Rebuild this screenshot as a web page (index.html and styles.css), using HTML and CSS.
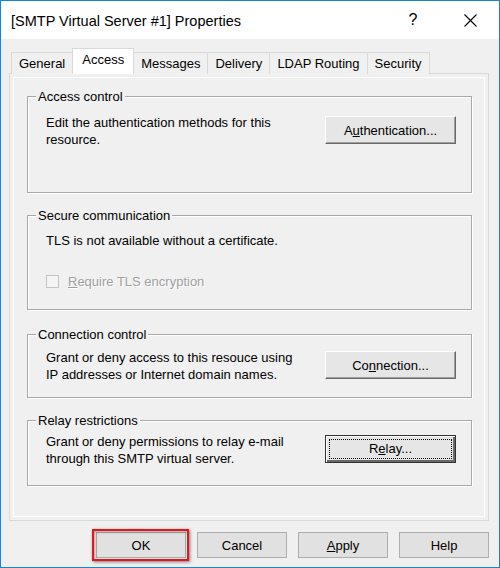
FILE: index.html
```html
<!DOCTYPE html>
<html lang="en">
<head>
    <meta charset="UTF-8">
    <title>[SMTP Virtual Server #1] Properties</title>
    <link rel="stylesheet" href="styles.css">
</head>
<body>

<div class="window">
    <div class="titlebar">
        <span class="title">[SMTP Virtual Server #1] Properties</span>
        <span class="help">?</span>
        <svg class="close" width="13" height="13" viewBox="0 0 13 13">
            <path d="M0.5 0.5 L12.5 12.5 M12.5 0.5 L0.5 12.5" stroke="#000" stroke-width="1.1" fill="none"/>
        </svg>
    </div>

    <div class="dialog">
        <div class="tabs">
            <div class="tab">General</div>
            <div class="tab active">Access</div>
            <div class="tab">Messages</div>
            <div class="tab">Delivery</div>
            <div class="tab">LDAP Routing</div>
            <div class="tab">Security</div>
        </div>

        <div class="panel">
            <div class="group group-access">
                <div class="group-title">Access control</div>
                <div class="group-body">
                    <p class="group-text">Edit the authentication methods for this<br>resource.</p>
                    <button class="btn">A<u>u</u>thentication...</button>
                </div>
            </div>

            <div class="group group-secure">
                <div class="group-title">Secure communication</div>
                <div class="group-body column">
                    <p class="group-text">TLS is not available without a certificate.</p>
                    <label class="check disabled">
                        <span class="check-box"></span>
                        <span><u>R</u>equire TLS encryption</span>
                    </label>
                </div>
            </div>

            <div class="group group-connection">
                <div class="group-title">Connection control</div>
                <div class="group-body">
                    <p class="group-text">Grant or deny access to this resouce using<br>IP addresses or Internet domain names.</p>
                    <button class="btn">Co<u>n</u>nection...</button>
                </div>
            </div>

            <div class="group group-relay">
                <div class="group-title">Relay restrictions</div>
                <div class="group-body">
                    <p class="group-text">Grant or deny permissions to relay e-mail<br>through this SMTP virtual server.</p>
                    <button class="btn focused"><span class="focus-ring">R<u>e</u>lay...</span></button>
                </div>
            </div>
        </div>

        <div class="buttons">
            <button class="dlg-btn marked">OK</button>
            <button class="dlg-btn">Cancel</button>
            <button class="dlg-btn"><u>A</u>pply</button>
            <button class="dlg-btn">Help</button>
        </div>
    </div>
</div>

</body>
</html>
```

FILE: styles.css
```css
body {
    margin: 0;
    font-family: "Liberation Sans", Arial, sans-serif;
    font-size: 13px;
    color: #000;
    background-color: #f0f0f0;
}
.window {
    width: 500px;
    height: 568px;
    box-sizing: border-box;
    border: 1px solid #1883d7;
    background-color: #f0f0f0;
}
.titlebar {
    display: flex;
    align-items: center;
    height: 38px;
    background-color: #ffffff;
}
.title {
    flex-grow: 1;
    padding-left: 10px;
    font-size: 14.5px;
    padding-top: 1px;
}
.help {
    width: 20px;
    text-align: center;
    font-size: 16px;
    margin-right: 41px;
}
.close {
    margin-right: 22px;
}
.dialog {
    padding: 9px 0 0 8px;
}

/* tab strip */
.tabs {
    display: flex;
    align-items: flex-end;
    padding-left: 2px;
    margin-bottom: -1px;
}
.tab {
    height: 21px;
    line-height: 22px;
    padding: 0 7px;
    border: 1px solid #d9d9d9;
    border-bottom: none;
    margin-right: -1px;
    background-color: #f0f0f0;
}
.tab.active {
    position: relative;
    z-index: 1;
    height: 25px;
    line-height: 22px;
    background-color: #ffffff;
    padding: 0 9px;
}
.panel {
    border: 1px solid #d9d9d9;
    box-shadow: inset 0 0 0 3px #f0f0f0, inset 0 0 0 4px #ffffff;
    padding: 22px 16px 0 17px;
    box-sizing: border-box;
    width: 480px;
    height: 448px;
}

/* group boxes */
.group {
    border: 1px solid #a9a9a9;
    box-shadow: inset 1px 1px 0 #ffffff, 1px 1px 0 #ffffff;
    box-sizing: border-box;
}
.group-title {
    display: table;
    margin: -8px 0 0 8px;
    padding: 0 2px;
    line-height: 16px;
    background-color: #f0f0f0;
}
.group-body {
    display: flex;
    justify-content: space-between;
    align-items: flex-start;
    padding: 0 15px 0 18px;
}
.group-body.column {
    flex-direction: column;
}
.group-text {
    margin: 0;
    line-height: 17px;
}
.group-access {
    height: 97px;
}
.group-access .group-body {
    padding-top: 9px;
}
.group-secure {
    height: 95px;
    margin-top: 22px;
}
.group-secure .group-body {
    padding-top: 8px;
}
.group-connection {
    height: 64px;
    margin-top: 24px;
}
.group-connection .group-body {
    padding-top: 6px;
}
.group-relay {
    height: 66px;
    margin-top: 22px;
}
.group-relay .group-body {
    padding-top: 4px;
}

/* buttons */
.btn {
    width: 131px;
    height: 28px;
    margin-top: 2px;
    font-family: inherit;
    font-size: 13px;
    color: #000;
    background-color: #e6e6e6;
    border: 1px solid;
    border-color: #ffffff #696969 #696969 #ffffff;
    box-shadow: inset -1px -1px 0 #a0a0a0;
    padding: 0;
}
.btn.focused {
    border-color: #333333;
    box-shadow: inset 1px 1px 0 #ffffff, inset -2px -2px 0 #696969;
    padding: 3px;
}
.focus-ring {
    display: block;
    height: 100%;
    box-sizing: border-box;
    line-height: 18px;
    border: 1px dotted #000;
}
.check {
    display: flex;
    align-items: center;
    margin-top: 24px;
    line-height: 17px;
}
.check-box {
    width: 11px;
    height: 11px;
    border: 1px solid #c3c3c3;
    background-color: #f4f4f4;
    margin-right: 9px;
}
.check.disabled {
    color: #a0a0a0;
    text-shadow: 1px 1px 0 #ffffff;
}

.buttons {
    display: flex;
    justify-content: flex-end;
    gap: 11px;
    padding-right: 10px;
    margin-top: 11px;
}
.dlg-btn {
    width: 90px;
    height: 26px;
    font-family: inherit;
    font-size: 13px;
    color: #000;
    background-color: #e1e1e1;
    border: 1px solid #adadad;
    padding: 0;
}
.marked {
    position: relative;
}
.marked::after {
    content: "";
    position: absolute;
    left: -5px;
    top: -4px;
    right: -4px;
    bottom: -4px;
    border: 2px solid #e8141b;
    box-shadow: 1px 1px 3px rgba(0, 0, 0, 0.5), inset 1px 1px 3px rgba(0, 0, 0, 0.35);
}
```
